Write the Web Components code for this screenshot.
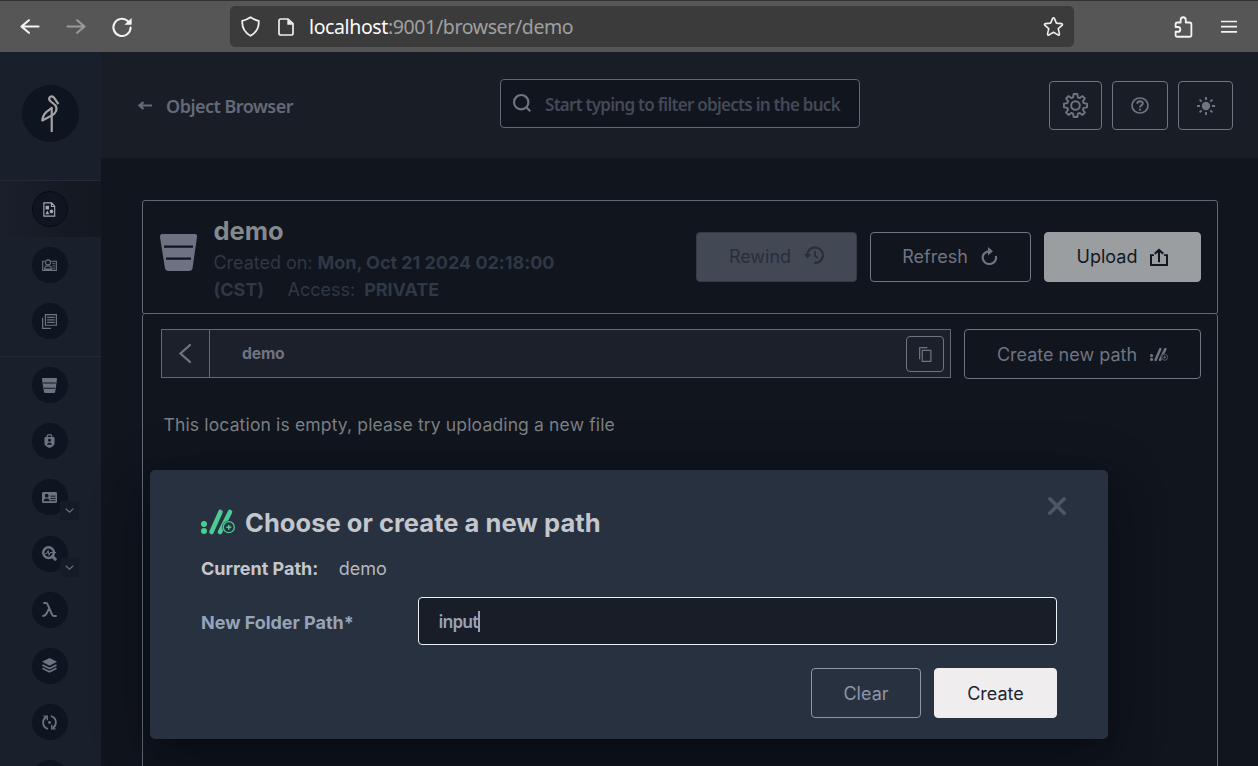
<!DOCTYPE html>
<html lang="en">
<head>
<meta charset="utf-8">
<title>MinIO Console</title>
<style>
html,body{margin:0;height:100%;overflow:hidden;background:#10151e}
body{font-family:Inter,sans-serif;font-size:17.5px;color:#6f7480}
</style>
</head>
<body>
<console-app></console-app>
<script>
const define=(name,html)=>{
  const t=document.createElement('template');t.innerHTML=html;
  customElements.define(name,class extends HTMLElement{
    constructor(){super();this.attachShadow({mode:'open'}).appendChild(t.content.cloneNode(true));}
  });
};
const bucket='<path fill="currentColor" d="M2 0H35Q37.500 0 37 3L32.500 35Q32 37.500 29.500 37.500H8Q5.500 37.500 5 35L0 3Q0 0 2 0Z"/>';
const pathShape='<circle cx="3" cy="14" r="3"/><circle cx="3" cy="21" r="3"/><path d="M19.500 2L10.500 22M29 2L19 22" stroke="currentColor" stroke-width="4.600" stroke-linecap="round"/>';
const ICONS={
 back:['0 0 20 20','<path fill="none" stroke="currentColor" stroke-width="2.200" stroke-linecap="round" stroke-linejoin="round" d="M18.500 10H1.500M9 2.500L1.500 10L9 17.500"/>'],
 forward:['0 0 20 20','<path fill="none" stroke="currentColor" stroke-width="2.200" stroke-linecap="round" stroke-linejoin="round" d="M1.500 10H18.500M11 2.500L18.500 10L11 17.500"/>'],
 reload:['0 0 20 20','<path fill="none" stroke="currentColor" stroke-width="2" stroke-linecap="round" d="M15.800 4A8.600 8.600 0 1 0 18.600 10.500"/><path fill="currentColor" d="M19.600 1V7.800H12.400Z"/>'],
 shield:['0 0 20 22','<path fill="none" stroke="currentColor" stroke-width="1.900" stroke-linejoin="round" d="M10 1.300Q14.500 4.300 18.700 5Q19.300 15.500 10 20.700Q.7 15.500 1.300 5Q5.500 4.300 10 1.300Z"/>'],
 page:['0 0 16 19','<path fill="none" stroke="currentColor" stroke-width="1.700" stroke-linejoin="round" d="M3 1H10L15 6V16Q15 18 13 18H3Q1 18 1 16V3Q1 1 3 1Z"/><path fill="currentColor" d="M9.300 1L15.300 7H9.300Z"/>'],
 star:['0 0 22 22','<path fill="none" stroke="currentColor" stroke-width="1.700" stroke-linejoin="round" d="M11 1.800Q11.600 1.800 12 2.700L14 7.500L19.300 8Q21.200 8.400 19.900 9.800L16 13.200L17.200 18.700Q17.300 20.500 15.700 19.800L11 17L6.300 19.800Q4.700 20.500 4.800 18.700L6 13.200L2.100 9.800Q.8 8.400 2.700 8L8 7.500L10 2.700Q10.400 1.800 11 1.800Z"/>'],
 puzzle:['0 0 20 22','<path fill="none" stroke="currentColor" stroke-width="1.900" stroke-linejoin="round" d="M3.500 6.500H7V4A2.700 2.700 0 0 1 12.400 4V6.500H16.500Q18.300 6.500 18.300 8.300V19Q18.300 20.800 16.500 20.800H3.500Q1.700 20.800 1.700 19V15.800H4.200A2.400 2.400 0 0 0 4.200 11H1.700V8.300Q1.700 6.500 3.500 6.500Z"/>'],
 menu:['0 0 16 14','<path stroke="currentColor" stroke-width="1.700" d="M0 1.500H16M0 6.700H16M0 11.900H16"/>'],
 arrow:['0 0 14 10','<path fill="none" stroke="currentColor" stroke-width="2.400" d="M14 5H1.500M5.500 1L1.500 5L5.500 9"/>'],
 search:['0 0 18 18','<circle cx="8.200" cy="8.200" r="7.200" fill="none" stroke="currentColor" stroke-width="2.200"/><path stroke="currentColor" stroke-width="2.200" d="M13.200 13.200L17.300 17.300"/>'],
 help:['0 0 18 18','<circle cx="9" cy="9" r="8" fill="none" stroke="currentColor" stroke-width="1.700"/><path fill="none" stroke="currentColor" stroke-width="2" d="M6.300 7.200C6.300 3.600 11.800 3.700 11.800 6.900C11.800 8.900 9 8.800 9 11.200M9 12.500V14.400"/>'],
 sun:['0 0 18 18','<circle cx="9" cy="9" r="4.200" fill="currentColor"/><path stroke="currentColor" stroke-width="1.900" d="M9 0V3M9 15V18M0 9H3M15 9H18M2.600 2.600L4.700 4.700M13.300 13.300L15.400 15.400M15.400 2.600L13.300 4.700M4.700 13.300L2.600 15.400"/>'],
 gear:['0 0 26 26','<path fill="none" stroke="currentColor" stroke-width="2" stroke-linejoin="round" d="M11.100 1H14.900L15.500 4.500L17.400 5.300L20.300 3.200L22.800 5.700L20.700 8.600L21.500 10.500L25 11.100V14.900L21.500 15.500L20.700 17.400L22.800 20.300L20.300 22.800L17.400 20.700L15.500 21.500L14.900 25H11.100L10.500 21.500L8.600 20.700L5.700 22.800L3.200 20.300L5.300 17.400L4.500 15.500L1 14.900V11.100L4.500 10.500L5.300 8.600L3.200 5.700L5.700 3.200L8.600 5.300L10.500 4.500Z"/><circle cx="13" cy="13" r="4.500" fill="none" stroke="currentColor" stroke-width="2"/>'],
 bucket:['0 0 37 37.500',bucket+'<path stroke="#10151e" stroke-width="2.200" d="M4 12.800H33M6 25H31"/>'],
 bucketsmall:['0 0 37 37.500',bucket+'<path stroke="#0e1420" stroke-width="2.600" d="M3 12.500H34M5 25.500H32"/>'],
 history:['0 0 20 18','<path fill="none" stroke="currentColor" stroke-width="2.300" d="M3.300 9.500A7.800 7.800 0 1 1 10.500 16.900"/><path fill="none" stroke="currentColor" stroke-width="1.700" d="M11 5V9.800L13.800 12"/><path fill="currentColor" d="M0 8H7L3.500 12.500Z"/>'],
 refresh:['0 0 16 19','<path fill="none" stroke="currentColor" stroke-width="2.200" d="M8.500 4.600A6.700 6.700 0 1 0 14.800 9.500"/><path fill="currentColor" d="M7 0L12 4.600L7 9Z"/>'],
 upload:['0 0 18 19','<path fill="none" stroke="currentColor" stroke-width="2" d="M4 7.500H1V18H17V7.500H14M9 15V3"/><path fill="none" stroke="currentColor" stroke-width="2.300" d="M4.800 6L9 2L13.200 6"/>'],
 copy:['0 0 14 16','<path fill="none" stroke="currentColor" stroke-width="1.300" d="M.7 13V.7H9M3.500 3.500H12.800V15.300H3.500Z"/>'],
 left:['0 0 12 20','<path fill="none" stroke="currentColor" stroke-width="2.300" stroke-linecap="round" d="M11 1L1.500 10L11 19"/>'],
 close:['0 0 18 18','<path stroke="currentColor" stroke-width="3.600" stroke-linecap="round" d="M1.800 1.800L16.200 16.200M16.200 1.800L1.800 16.200"/>'],
 path:['0 0 34 24','<g fill="currentColor">'+pathShape+'</g><circle cx="27.800" cy="17.200" r="6.600" fill="var(--hole,#28313f)"/><circle cx="27.800" cy="17.200" r="5.500" fill="none" stroke="currentColor" stroke-width="1.300"/><path stroke="currentColor" stroke-width="1.500" d="M25.300 17.200H30.300M27.800 14.700V19.700"/>'],
 objects:['0 0 15 16','<path fill="none" stroke="currentColor" stroke-width="1.300" d="M1 1H10L13.500 4.500V15H1ZM9.700 1V4.800H13.500"/><path fill="currentColor" d="M3 4H7V8H3ZM5 9L7.200 13H2.800Z"/><circle cx="9.800" cy="10" r="2.100" fill="currentColor"/>'],
 keys:['0 0 16 13','<path fill="none" stroke="currentColor" stroke-width="1.200" d="M3 2.500H.7V12.300H15.300V2.500H9.800M3 11V9Q3.500 7.500 6.400 7.500Q9 7.500 9.800 9V11Z"/><circle cx="6.400" cy="3.700" r="2.700" fill="none" stroke="currentColor" stroke-width="1.200"/><path stroke="currentColor" d="M11 5H14M11 7.500H14M11 10H14"/>'],
 docs:['0 0 16 16','<path fill="none" stroke="currentColor" stroke-width="1.300" d="M3.700 .7H15.300V12H3.700ZM.7 4V15.300H9.500M5.500 3.700H13.500M5.500 6.300H13.500M5.500 9H13.500"/>'],
 lock:['0 0 12 15','<path fill="none" stroke="currentColor" stroke-width="1.300" d="M3.500 4V2.500Q3.500 .7 6 .7Q8.500 .7 8.500 2.500V4"/><path fill="currentColor" d="M1.500 3.300H10.500Q11.500 3.300 11.500 4.300V10Q11.300 13.500 6 15Q.7 13.500 .5 10V4.300Q.5 3.300 1.500 3.300Z"/><circle cx="6" cy="6.800" r="1.600" fill="#0e1420"/><path fill="#0e1420" d="M3 11.500Q6 6.500 9 11.500Z"/>'],
 identity:['0 0 16 12','<rect width="16" height="12" rx="1.500" fill="currentColor"/><circle cx="5" cy="4" r="2" fill="#0e1420"/><path fill="#0e1420" d="M2 10V8.500Q5 5.500 8 8.500V10Z"/><path stroke="#0e1420" d="M9 4.500H14.500M9 7H14.500M9 9.500H14.500"/>'],
 monitor:['0 0 16 16','<circle cx="7" cy="7" r="5.700" fill="none" stroke="currentColor" stroke-width="2.600"/><path fill="none" stroke="currentColor" stroke-width="1.100" d="M3.500 8H5L6.500 5L7.500 9.500L9 7H15"/><path stroke="currentColor" stroke-width="3.200" stroke-linecap="round" d="M11.300 11.300L14.200 14.200"/>'],
 lambda:['0 0 16 16','<path fill="none" stroke="currentColor" stroke-width="2.100" d="M1.500 1.100H4.200Q5.500 1.100 6 2.500L10.500 13Q11.200 15 12.500 14.900H15.700M7.800 6.500L5 12Q3.500 14.900 .3 14.900"/>'],
 layers:['0 0 16 16','<path fill="currentColor" d="M8 0L16 4.100L8 8.200L0 4.100Z"/><path fill="none" stroke="currentColor" stroke-width="1.900" d="M.5 7.500L8 11.300L15.500 7.500M.5 11L8 14.800L15.500 11"/>'],
 sync:['0 0 16 16','<path fill="none" stroke="currentColor" stroke-width="1.900" d="M6.500 14.900Q1 13 1.200 8Q1.300 4 4.500 2M9.500 1.100Q15 3 14.800 8Q14.700 12 11.500 14"/><path fill="none" stroke="currentColor" stroke-width="1.500" d="M1.500 1.200H5.600V5.500M14.500 14.800H10.400V10.500"/><circle cx="8" cy="8" r="1.500" fill="currentColor"/>'],
 down:['0 0 10 6','<path fill="none" stroke="currentColor" stroke-width="1.300" d="M.7 .7L5 5L9.300 .7"/>'],
 crane:['0 0 20 40','<path fill="none" stroke="currentColor" stroke-width="2.300" stroke-linejoin="round" d="M18.300 9.500L14.300 3.600Q12 .5 9.400 2Q7.500 4.500 10 6.600L14.800 10.500Q17.200 13 15.800 17Q14.300 20.500 10.800 21.800L1.400 26.800Q2 21 5.500 18L11.300 13.500V39"/>']
};
class UiIcon extends HTMLElement{
  constructor(){super();this.attachShadow({mode:'open'});}
  connectedCallback(){
    const [vb,body]=ICONS[this.getAttribute('name')],w=this.getAttribute('w'),h=this.getAttribute('h');
    this.shadowRoot.innerHTML=`<style>:host{display:inline-block;flex:none;width:${w}px;height:${h}px}svg{display:block;overflow:visible}</style><svg width="${w}" height="${h}" viewBox="${vb}" preserveAspectRatio="none" aria-hidden="true">${body}</svg>`;
  }
}
customElements.define('ui-icon',UiIcon);

define('ui-button',`<style>
:host{display:inline-flex;box-sizing:border-box;align-items:center;justify-content:center;gap:13px;height:50px;border:1px solid #6f7480;border-radius:4px;color:#6f7480;flex:none;font-size:18px;white-space:nowrap}
:host([disabled]){background:#434855;border-color:#353a46;color:#292e3a}
:host([solid]){background:#9b9ea1;border-color:#9b9ea1;color:#121722}
:host([primary]){background:#efedee;border-color:#efedee;color:#1d2431}
:host([outline]){border-color:#8d96a7;color:#8d96a7}
</style><slot></slot>`);

define('browser-bar',`<style>
:host{display:flex;box-sizing:border-box;height:52px;flex:none;align-items:center;background:#565656;border-top:1px solid #323232;padding:0 19px 0 20px;color:#f4f4f4}
.nav{display:flex;align-items:center;gap:26px;width:210px}
.nav ui-icon{margin-left:-.5px;margin-right:.5px}
.dim{color:#999}
.url{box-sizing:border-box;width:844px;height:41px;border-radius:5px;background:#3b3b3b;display:flex;align-items:center;padding:0 10px 0 11px;font:19.500px "Noto Sans",sans-serif;letter-spacing:-.380px;color:#a0a0a0}
.url ui-icon{color:#eee}.url b{font-weight:400;color:#fbfbfb}
.addr{margin-left:15px;flex:1}
.tools{margin-left:auto;display:flex;gap:28px;align-items:center;padding-right:2px}
</style>
<div class="nav"><ui-icon name="back" w="20" h="17"></ui-icon><ui-icon class="dim" name="forward" w="20" h="17"></ui-icon><ui-icon name="reload" w="20" h="20"></ui-icon></div>
<div class="url"><ui-icon name="shield" w="19" h="21"></ui-icon><ui-icon name="page" w="16" h="18" style="margin-left:18px"></ui-icon><span class="addr"><b>localhost</b>:9001/browser/demo</span><ui-icon name="star" w="21" h="21"></ui-icon></div>
<div class="tools"><ui-icon name="puzzle" w="19" h="22"></ui-icon><ui-icon name="menu" w="16" h="14"></ui-icon></div>`);

class NavItem extends HTMLElement{
  constructor(){super();this.attachShadow({mode:'open'});}
  connectedCallback(){
    this.shadowRoot.innerHTML=`<style>
:host{display:flex;position:relative;height:56.200px;width:101px;flex:none;align-items:center;justify-content:center;color:#6d7380}
:host([active]){background:linear-gradient(90deg,#1a1f2c,#151922 70%,#14181f);color:#a5a9b0}
.disc{box-sizing:border-box;width:36px;height:36px;border-radius:50%;background:#0e1420;display:flex;align-items:center;justify-content:center;margin-right:2px}
:host([active]) .disc{border:1px solid #080b12}
.more{position:absolute;left:60px;top:32px;width:19px;height:19px;border-radius:2px;background:#151b27;display:flex;align-items:center;justify-content:center}
</style><div class="disc"><ui-icon name="${this.getAttribute('icon')}" w="${this.getAttribute('w')||15}" h="${this.getAttribute('h')||15}"></ui-icon></div>${this.hasAttribute('more')?'<div class="more"><ui-icon name="down" w="9" h="5"></ui-icon></div>':''}`;
  }
}
customElements.define('nav-item',NavItem);

define('side-bar',`<style>
:host{display:flex;flex-direction:column;width:101px;flex:none;background:#1a1f2c;overflow:hidden}
.logo{height:128px;box-sizing:border-box;padding:33px 0 0 22px;flex:none}
.disc{width:57px;height:57px;border-radius:50%;background:#0e1420;display:flex;align-items:center;justify-content:center;color:#a3a3a3}
.group{border-top:1px solid #242a37;padding-bottom:6.400px;flex:none}
</style>
<div class="logo"><div class="disc"><ui-icon name="crane" w="19" h="38"></ui-icon></div></div>
<div class="group"><nav-item active icon="objects" w="13"></nav-item><nav-item icon="keys" h="12"></nav-item><nav-item icon="docs"></nav-item></div>
<div class="group"><nav-item icon="bucketsmall"></nav-item><nav-item icon="lock" w="11" h="14"></nav-item><nav-item icon="identity" h="11" more></nav-item><nav-item icon="monitor" more></nav-item><nav-item icon="lambda"></nav-item><nav-item icon="layers"></nav-item><nav-item icon="sync"></nav-item><nav-item icon="bucketsmall"></nav-item></div>`);

define('page-header',`<style>
:host{display:flex;box-sizing:border-box;height:106px;flex:none;background:#191d26;padding:0 25px 0 37px;font-family:"Noto Sans",sans-serif;font-weight:600;color:#646a79}
.title{display:flex;align-items:center;width:362px;height:106px;gap:14px;font-size:18px;letter-spacing:-.520px}
.title span{margin-top:2px}
.search{box-sizing:border-box;margin-top:27px;width:360px;height:49px;border:1px solid #646874;border-radius:4px;background:#10151e;display:flex;align-items:center;padding:0 17px 0 12px;gap:14px;color:#434957;font-size:17px;letter-spacing:-.720px;white-space:nowrap}
.search ui-icon{color:#6f7480;margin-top:-2px}
.search span{margin-top:1px}
.actions{display:flex;margin:29px 0 0 auto;gap:10px}
.actions ui-button{height:49px}
</style>
<div class="title"><ui-icon name="arrow" w="14" h="9"></ui-icon><span>Object Browser</span></div>
<div class="search"><ui-icon name="search" w="18" h="18"></ui-icon><span>Start typing to filter objects in the buck</span></div>
<div class="actions"><ui-button style="width:53px"><ui-icon name="gear" w="25" h="25"></ui-icon></ui-button><ui-button style="width:56px"><ui-icon name="help" w="18" h="17"></ui-icon></ui-button><ui-button style="width:55px"><ui-icon name="sun" w="18" h="18"></ui-icon></ui-button></div>`);

define('bucket-header',`<style>
:host{display:flex;box-sizing:border-box;height:114px;flex:none;border:1px solid #646874;border-radius:3px 3px 2px 2px;padding:0 16px 0 17px}
.icon{color:#6d7382;margin-top:33px}
.info{margin:15px 0 0 16.500px;color:#2f3845;font-size:18px;line-height:27px;letter-spacing:-.030px;white-space:nowrap}
h1{font-size:25.500px;line-height:30px;margin:0 0 3px;color:#85888c;letter-spacing:0}
p{margin:0}
.access{margin-left:18.500px}
.access b{margin-left:-1px}
.actions{margin:31px 0 0 auto;display:flex;gap:13px}
.actions ui-button{padding-bottom:2px}
</style>
<ui-icon class="icon" name="bucket" w="37" h="37"></ui-icon>
<div class="info"><h1>demo</h1><p>Created on: <b>Mon, Oct 21 2024 02:18:00</b></p><p><b>(CST)</b> <span class="access">Access:&nbsp; <b>PRIVATE</b></span></p></div>
<div class="actions"><ui-button disabled style="width:161px">Rewind<ui-icon name="history" w="20" h="18" style="margin-top:-2px"></ui-icon></ui-button><ui-button style="width:161px;padding-right:2px">Refresh<ui-icon name="refresh" w="16" h="18"></ui-icon></ui-button><ui-button solid style="width:157px">Upload<ui-icon name="upload" w="18" h="18" style="margin-top:1px"></ui-icon></ui-button></div>`);

define('path-bar',`<style>
:host{display:flex;gap:13px}
.crumbs{box-sizing:border-box;width:790px;height:49px;border:1px solid #646874;background:#1b202b;display:flex;align-items:center;padding-right:6px}
.back{box-sizing:border-box;width:48px;height:47px;border-right:1px solid #646874;display:flex;align-items:center;justify-content:center}
.back ui-icon{margin-right:1px}
.name{margin:-1px 0 0 32px;flex:1;font-weight:700;font-size:15.700px;letter-spacing:-.150px}
.copy{width:38px;height:36px}
.make{width:237px;--hole:#10151e}
</style>
<div class="crumbs"><div class="back"><ui-icon name="left" w="12" h="19"></ui-icon></div><span class="name">demo</span><ui-button class="copy"><ui-icon name="copy" w="13" h="15" style="margin-top:1px"></ui-icon></ui-button></div>
<ui-button class="make">Create new path<ui-icon name="path" w="18" h="13"></ui-icon></ui-button>`);

define('object-list',`<style>
:host{display:block;box-sizing:border-box;flex:1;border:1px solid #646874;border-width:0 1px;border-radius:3px;padding:15px 16px 0 18px;margin-bottom:-6px}
p{margin:33px 0 0 2.500px;font-size:17.500px;letter-spacing:.150px;line-height:26px;color:#7c7f83}
</style><path-bar></path-bar><p>This location is empty, please try uploading a new file</p>`);

define('path-dialog',`<style>
:host{position:absolute;left:150px;top:470px;box-sizing:border-box;width:958px;height:269px;border-radius:5px;background:#28313f;box-shadow:0 13px 19px -8px rgba(0,0,0,.2),0 30px 47px 4px rgba(0,0,0,.14),0 11px 57px 10px rgba(0,0,0,.12);padding:26px 51px 0;color:#c3c7cd;font-size:18px}
header{display:flex;align-items:flex-start;height:59px}
header .glyph{color:#4ccb92;margin-top:14px}
h2{font-size:25.500px;line-height:30px;margin:12px 0 0 10px;letter-spacing:.040px}
header .close{color:#4c5666;margin:1px -9px 0 auto}
.row{display:flex;align-items:center;height:27px;letter-spacing:-.010px}
.row .v{margin-left:20.500px;color:#b4b8bf}
.field{display:flex;align-items:center;margin-top:15px;height:48px;color:#97a3b8}
.field b{width:217px;padding-top:2px;box-sizing:border-box;letter-spacing:-.030px}
.input{box-sizing:border-box;flex:1;height:48px;border:1px solid #eaf0f3;border-radius:4px;background:#191d28;padding-left:19.500px;display:flex;align-items:center;font:600 17px "Noto Sans",sans-serif;letter-spacing:-.850px}
.input span{margin-top:1px}
.caret{width:2px;height:21px;background:#97a3b8}
footer{display:flex;justify-content:flex-end;gap:13px;margin-top:23px}
</style>
<header><ui-icon class="glyph" name="path" w="34" h="24"></ui-icon><h2>Choose or create a new path</h2><ui-icon class="close" name="close" w="18" h="18"></ui-icon></header>
<div class="row"><b>Current Path:</b><span class="v">demo</span></div>
<div class="field"><b>New Folder Path*</b><div class="input"><span>input</span><i class="caret"></i></div></div>
<footer><ui-button outline style="width:110px">Clear</ui-button><ui-button primary style="width:123px">Create</ui-button></footer>`);

define('console-app',`<style>
:host{display:flex;flex-direction:column;height:766px;width:1258px;position:relative;overflow:hidden}
.body{display:flex;flex:1;min-height:0}
.main{display:flex;flex-direction:column;flex:1;background:#10151e}
.content{display:flex;flex-direction:column;flex:1;padding:42px 40px 0 41px}
</style>
<browser-bar></browser-bar>
<div class="body"><side-bar></side-bar><div class="main"><page-header></page-header><div class="content"><bucket-header></bucket-header><object-list></object-list></div></div></div>
<path-dialog></path-dialog>`);
</script>
</body>
</html>
